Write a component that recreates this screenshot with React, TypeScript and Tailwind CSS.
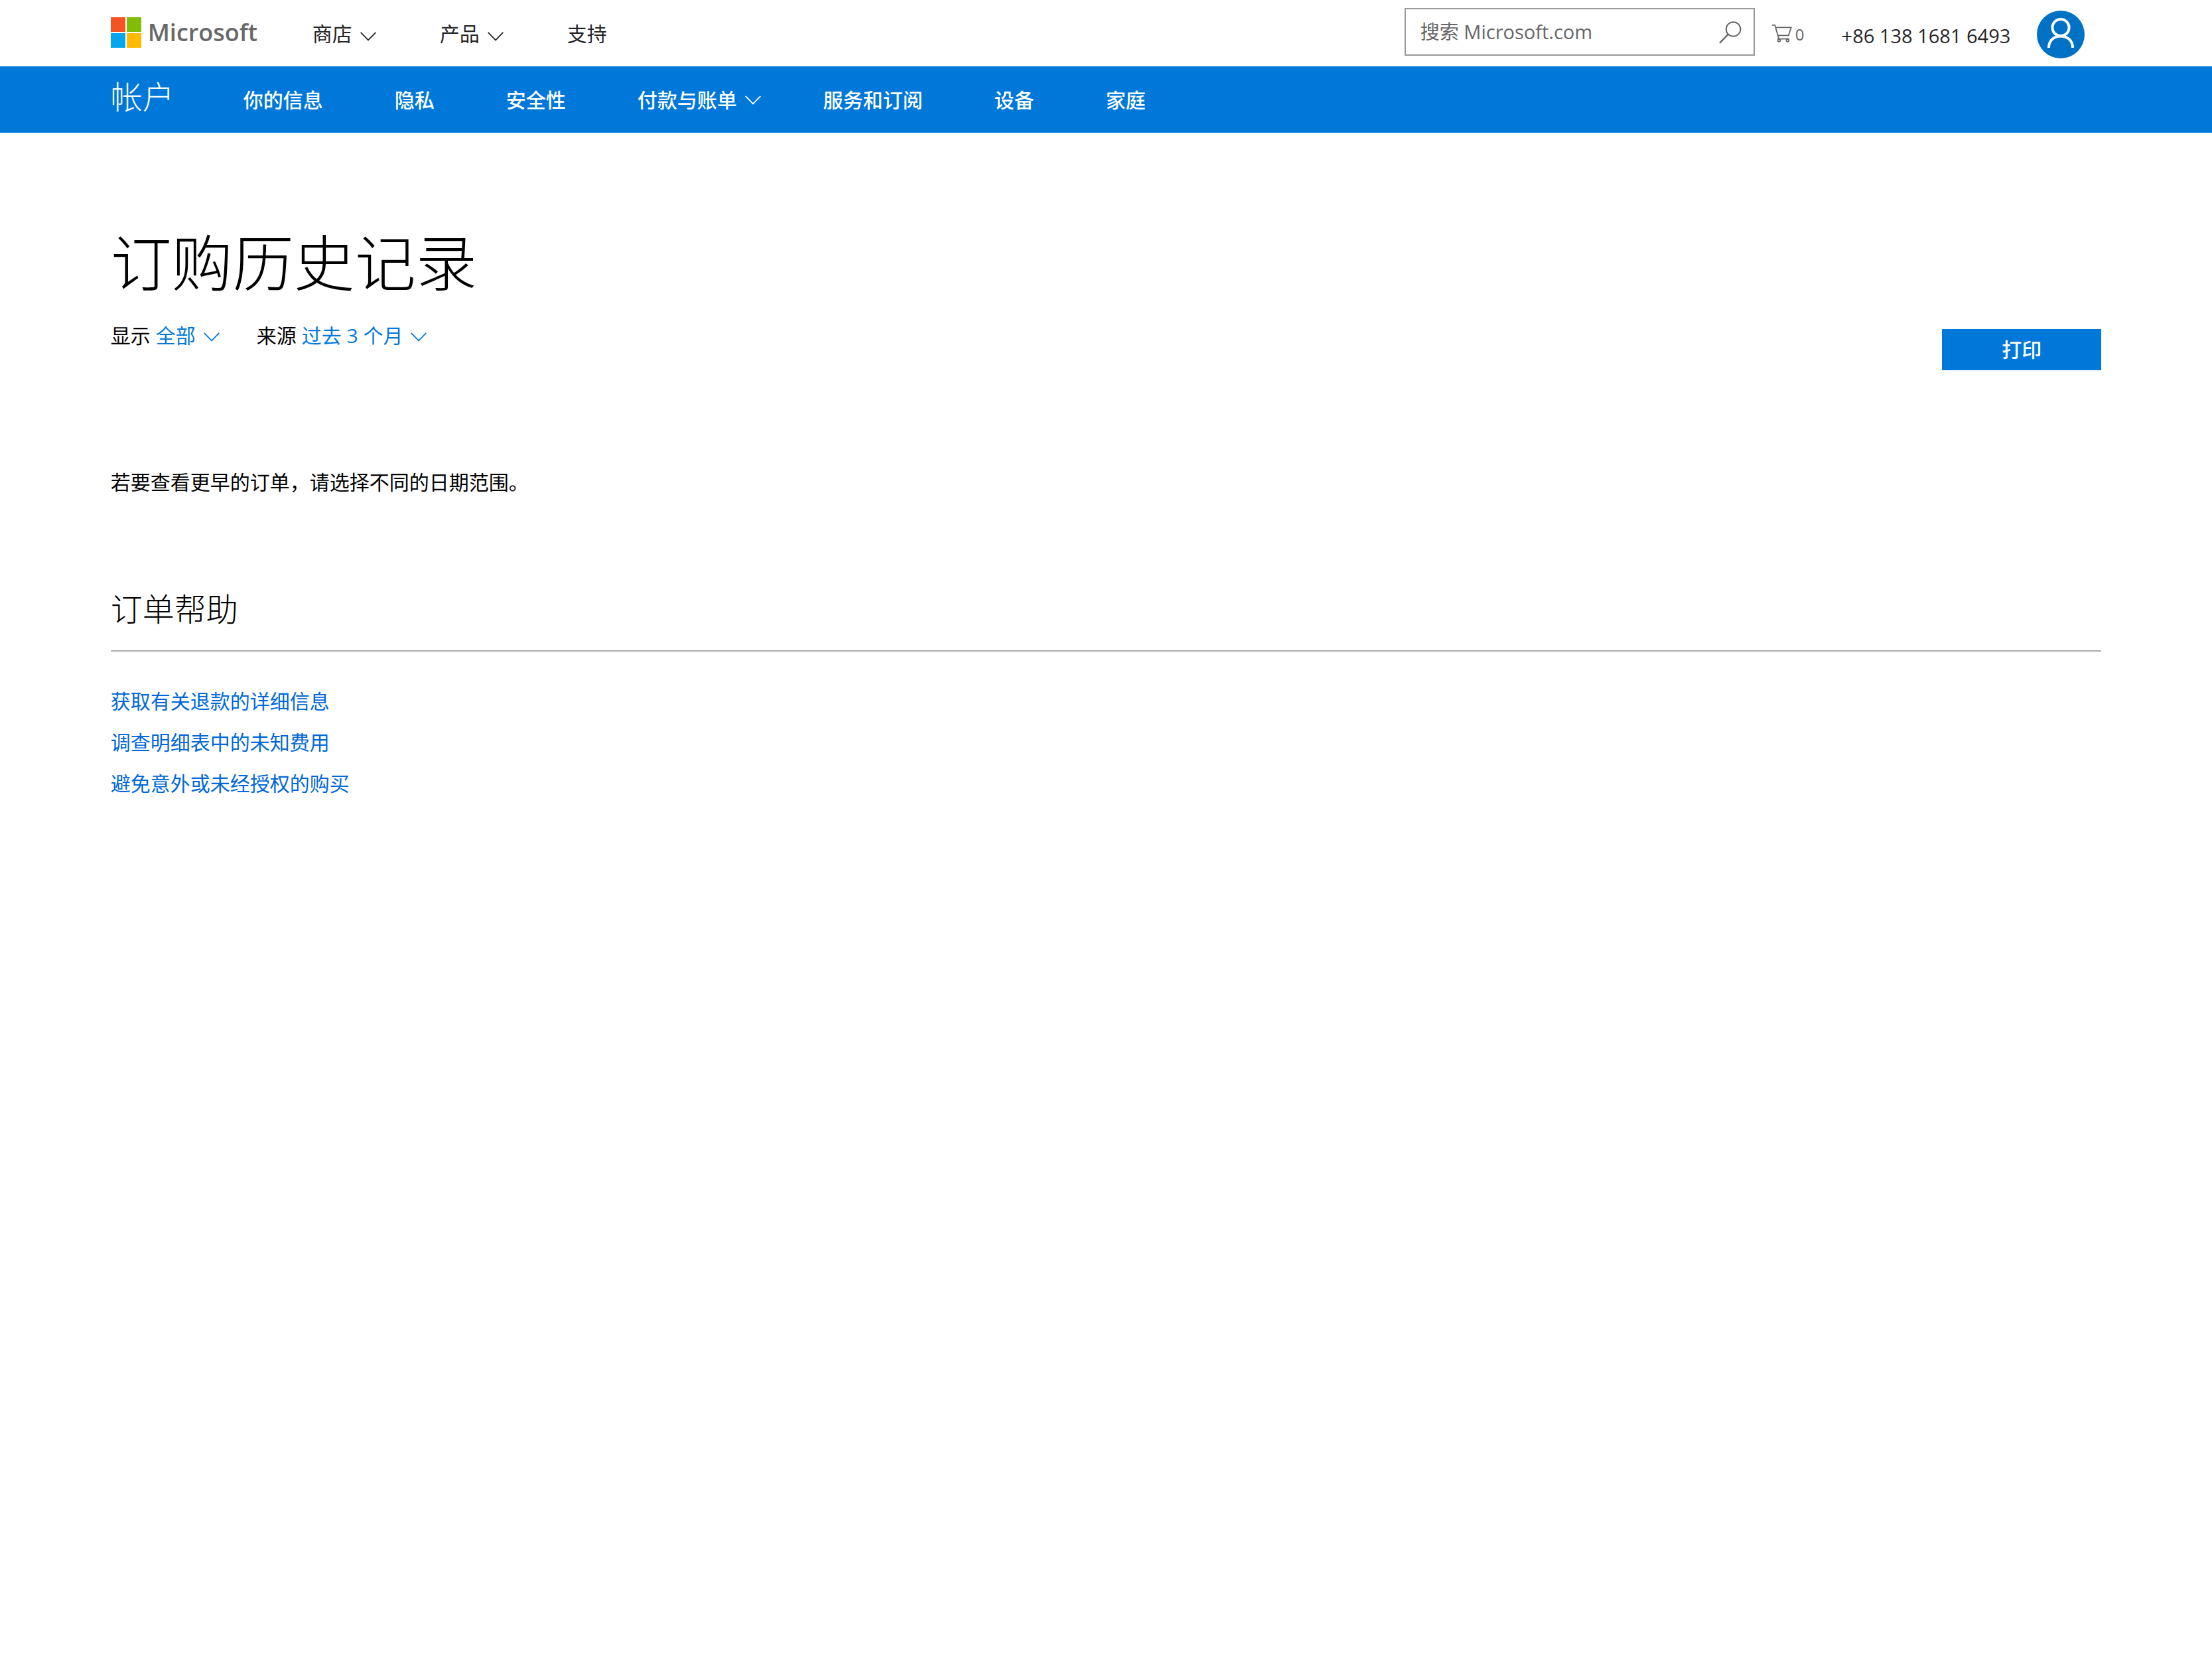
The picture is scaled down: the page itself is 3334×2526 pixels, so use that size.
import type { ReactNode } from "react";

function Chevron({ className = "" }: { className?: string }) {
  return (
    <svg
      aria-hidden="true"
      viewBox="0 0 24 14"
      fill="none"
      stroke="currentColor"
      strokeWidth="1.8"
      className={"h-[14px] w-6 shrink-0 " + className}
    >
      <path d="M0.7 0.9 12 12.4 23.3 0.9" />
    </svg>
  );
}

function MicrosoftLogo() {
  return (
    <a href="#" aria-label="Microsoft" className="flex items-center gap-2.5">
      <svg aria-hidden="true" viewBox="0 0 46 46" className="size-[46px]">
        <rect width="22" height="22" fill="#f65325" />
        <rect x="24" width="22" height="22" fill="#81bc06" />
        <rect y="24" width="22" height="22" fill="#05a6f0" />
        <rect x="24" y="24" width="22" height="22" fill="#ffba08" />
      </svg>
      <span className="text-[36px] leading-[46px] font-semibold text-[#686868]">Microsoft</span>
    </a>
  );
}

function SearchIcon() {
  return (
    <svg aria-hidden="true" viewBox="0 0 34 34" fill="none" stroke="currentColor" strokeWidth="2" className="size-[34px]">
      <circle cx="21.5" cy="12" r="10.8" />
      <path d="M13.8 19.7 1 32.8" strokeWidth="2.4" />
    </svg>
  );
}

function CartIcon() {
  return (
    <svg aria-hidden="true" viewBox="0 0 30 28" fill="none" stroke="currentColor" strokeWidth="1.8" className="h-7 w-[30px]">
      <path d="M0 1.9h4.2l6 20.6M5 5.4h23.7l-4 12H9" />
      <path d="M8 22.6h18" />
      <circle cx="10.4" cy="25" r="1.9" />
      <circle cx="23.4" cy="25" r="1.9" />
    </svg>
  );
}

function Avatar() {
  return (
    <svg aria-hidden="true" viewBox="0 0 72 72" className="size-[72px]">
      <circle cx="36" cy="36" r="36" fill="#0072c6" />
      <g fill="none" stroke="#fff" strokeWidth="4">
        <circle cx="36" cy="25.6" r="12.6" />
        <path d="M18 56C18 45 26 38.4 36 38.4S54 45 54 56" />
      </g>
    </svg>
  );
}

function TopBar() {
  return (
    <header className="flex h-[100px] items-center justify-between pr-[calc(5%+25px)] pl-[5%]">
      <div className="flex items-center">
        <div className="w-[304px] pb-0.5">
          <MicrosoftLogo />
        </div>
        <nav aria-label="主导航" className="flex items-center gap-24 pt-0.5 text-[#262626]">
          <button type="button" className="flex items-center gap-3">
            商店
            <Chevron className="mt-2" />
          </button>
          <button type="button" className="flex items-center gap-3">
            产品
            <Chevron className="mt-2" />
          </button>
          <a href="#">支持</a>
        </nav>
      </div>
      <div className="flex items-center">
        <form role="search" className="mb-1 flex h-[72px] w-[528px] items-center border-2 border-[#999] pr-[18px] pl-[22px] text-[#666]">
          <input
            type="search"
            aria-label="搜索 Microsoft.com"
            placeholder="搜索 Microsoft.com"
            className="min-w-0 flex-1 bg-transparent text-[29px] outline-none placeholder:text-[#666] placeholder:opacity-100"
          />
          <button type="button" aria-label="搜索" className="pt-0.5">
            <SearchIcon />
          </button>
        </form>
        <a href="#" aria-label="购物车 0" className="ml-[26px] flex items-center gap-[5px] text-[#666]">
          <CartIcon />
          <span className="mt-1 text-2xl">0</span>
        </a>
        <button type="button" className="ml-14 flex items-center gap-10 pt-1 text-[#262626]">
          <span className="pt-1 text-[29px]">+86 138 1681 6493</span>
          <Avatar />
        </button>
      </div>
    </header>
  );
}

function AccountBar() {
  return (
    <nav aria-label="帐户导航" className="flex h-[100px] items-center bg-[#0078d9] px-[5%] text-white">
      <a href="#" className="mb-2 w-[200px] text-[48px] leading-none font-light">
        帐户
      </a>
      <div className="flex items-center gap-[108px] pt-0.5 font-medium">
        <a href="#">你的信息</a>
        <a href="#">隐私</a>
        <a href="#">安全性</a>
        <button type="button" className="-mr-3.5 flex items-center gap-3 font-medium">
          付款与账单
          <Chevron />
        </button>
        <a href="#">服务和订阅</a>
        <a href="#">设备</a>
        <a href="#">家庭</a>
      </div>
    </nav>
  );
}

function Filter({ id, label, children }: { id: string; label: string; children: ReactNode }) {
  return (
    <div className="flex items-center gap-2">
      <label htmlFor={id}>{label}</label>
      <div className="relative flex items-center text-[#0078d9]">
        <select id={id} className="field-sizing-content cursor-pointer appearance-none bg-transparent pr-9">
          {children}
        </select>
        <Chevron className="pointer-events-none absolute right-0 mt-1" />
      </div>
    </div>
  );
}

const helpLinks = ["获取有关退款的详细信息", "调查明细表中的未知费用", "避免意外或未经授权的购买"];

export default function App() {
  return (
    <div
      lang="zh-CN"
      className="min-h-screen bg-white font-['Open_Sans','Noto_Sans_CJK_SC',sans-serif] text-[30px] leading-10 text-black"
    >
      <TopBar />
      <AccountBar />
      <main className="px-[5%] pt-32">
        <h1 className="text-[92px] leading-[136px] font-light">订购历史记录</h1>
        <div className="mt-[22px] flex items-start justify-between">
          <div className="flex items-center gap-14">
            <Filter id="order-type" label="显示">
              <option>全部</option>
            </Filter>
            <Filter id="order-range" label="来源">
              <option>过去 3 个月</option>
            </Filter>
          </div>
          <button type="button" className="mt-2.5 h-[62px] w-60 bg-[#0078d9] font-medium text-white">
            打印
          </button>
        </div>
        <p className="mt-[149px]">若要查看更早的订单，请选择不同的日期范围。</p>
        <section className="mt-[139px]">
          <h2 className="border-b-2 border-[#aaa] pb-[30px] text-[48px] leading-[64px] font-light">订单帮助</h2>
          <ul className="mt-11 text-[#0067d9]">
            {helpLinks.map((text) => (
              <li key={text} className="leading-[62px]">
                <a href="#">{text}</a>
              </li>
            ))}
          </ul>
        </section>
      </main>
    </div>
  );
}
